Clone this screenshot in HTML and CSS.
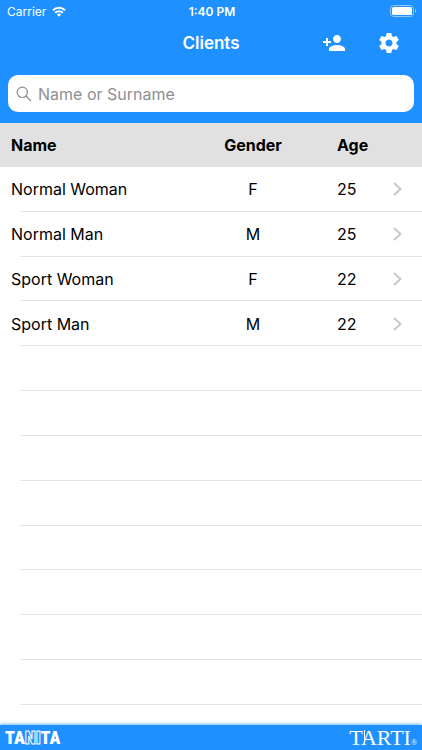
FILE: index.html
```
<!DOCTYPE html>
<html lang="en">
<head>
  <meta charset="UTF-8">
  <meta name="viewport" content="width=device-width, initial-scale=1.0">
  <title>Clients</title>
  <link rel="stylesheet" href="styles.css">
</head>
<body>
  <!-- Top: status bar, title and search -->
  <header class="header">
    <div class="status-bar">
      <div class="carrier">
        <span>Carrier</span>
        <svg width="14" height="11" viewBox="0 0 14 11" fill="none" stroke="#fff" stroke-width="2">
          <path d="M1 4.2a8.6 8.6 0 0 1 12 0M3.2 6.7a5.4 5.4 0 0 1 7.6 0"/>
          <path d="M7 10.8L4.8 8.6a3.1 3.1 0 0 1 4.4 0z" fill="#fff" stroke="none"/>
        </svg>
      </div>
      <span class="clock">1:40 PM</span>
      <div class="battery">
        <svg width="27" height="12" viewBox="0 0 27 12">
          <rect x="0.5" y="0.5" width="23" height="11" rx="3" fill="none" stroke="#8fc7ff"/>
          <rect x="2" y="2" width="20" height="8" rx="1.5" fill="#fff"/>
          <path d="M25 4a2.2 2.2 0 0 1 0 4z" fill="#8fc7ff"/>
        </svg>
      </div>
    </div>

    <div class="navbar">
      <h1>Clients</h1>
      <div class="nav-actions">
        <button type="button" class="btn" aria-label="Add client">
          <svg width="24" height="24" viewBox="0 0 24 24" fill="#fff">
            <path d="M15 12c2.21 0 4-1.79 4-4s-1.79-4-4-4-4 1.79-4 4 1.79 4 4 4zm-9-2V7H4v3H1v2h3v3h2v-3h3v-2H6zm9 4c-2.67 0-8 1.34-8 4v2h16v-2c0-2.66-5.33-4-8-4z"/>
          </svg>
        </button>
        <button type="button" class="btn" aria-label="Settings">
          <svg width="24" height="24" viewBox="0 0 24 24" fill="#fff">
            <path d="M19.43 12.98c.04-.32.07-.64.07-.98s-.03-.66-.07-.98l2.11-1.65c.19-.15.24-.42.12-.64l-2-3.46c-.12-.22-.39-.3-.61-.22l-2.49 1c-.52-.4-1.08-.73-1.69-.98l-.38-2.65C14.46 2.18 14.25 2 14 2h-4c-.25 0-.46.18-.49.42l-.38 2.65c-.61.25-1.17.59-1.69.98l-2.49-1c-.23-.09-.49 0-.61.22l-2 3.46c-.13.22-.07.49.12.64l2.11 1.65c-.04.32-.07.65-.07.98s.03.66.07.98l-2.11 1.65c-.19.15-.24.42-.12.64l2 3.46c.12.22.39.3.61.22l2.49-1c.52.4 1.08.73 1.69.98l.38 2.65c.03.24.24.42.49.42h4c.25 0 .46-.18.49-.42l.38-2.65c.61-.25 1.17-.59 1.69-.98l2.49 1c.23.09.49 0 .61-.22l2-3.46c.12-.22.07-.49-.12-.64l-2.11-1.65zM12 15.5c-1.93 0-3.5-1.57-3.5-3.5s1.57-3.5 3.5-3.5 3.5 1.57 3.5 3.5-1.57 3.5-3.5 3.5z"/>
          </svg>
        </button>
      </div>
    </div>

    <label class="search">
      <svg width="16" height="16" viewBox="0 0 16 16" fill="none" stroke="#8e8e93" stroke-width="1.2">
        <circle cx="6.3" cy="6.3" r="5.2"/>
        <path d="M10 10l5 5"/>
      </svg>
      <input type="text" placeholder="Name or Surname" aria-label="Name or Surname">
    </label>
  </header>

  <!-- Client list -->
  <main class="list">
    <table class="clients">
      <thead>
        <tr>
          <th class="name">Name</th>
          <th class="gender">Gender</th>
          <th class="age">Age</th>
          <th class="more"></th>
        </tr>
      </thead>
      <tbody>
        <tr>
          <td class="name">Normal Woman</td>
          <td class="gender">F</td>
          <td class="age">25</td>
          <td class="more"><a href="#" aria-label="Open Normal Woman"><svg width="9" height="14" viewBox="0 0 9 14"><path d="M1 1l6.5 6L1 13"/></svg></a></td>
        </tr>
        <tr>
          <td class="name">Normal Man</td>
          <td class="gender">M</td>
          <td class="age">25</td>
          <td class="more"><a href="#" aria-label="Open Normal Man"><svg width="9" height="14" viewBox="0 0 9 14"><path d="M1 1l6.5 6L1 13"/></svg></a></td>
        </tr>
        <tr>
          <td class="name">Sport Woman</td>
          <td class="gender">F</td>
          <td class="age">22</td>
          <td class="more"><a href="#" aria-label="Open Sport Woman"><svg width="9" height="14" viewBox="0 0 9 14"><path d="M1 1l6.5 6L1 13"/></svg></a></td>
        </tr>
        <tr>
          <td class="name">Sport Man</td>
          <td class="gender">M</td>
          <td class="age">22</td>
          <td class="more"><a href="#" aria-label="Open Sport Man"><svg width="9" height="14" viewBox="0 0 9 14"><path d="M1 1l6.5 6L1 13"/></svg></a></td>
        </tr>
        <!-- Empty rows -->
        <tr><td class="name"></td><td></td><td></td><td></td></tr>
        <tr><td class="name"></td><td></td><td></td><td></td></tr>
        <tr><td class="name"></td><td></td><td></td><td></td></tr>
        <tr><td class="name"></td><td></td><td></td><td></td></tr>
        <tr><td class="name"></td><td></td><td></td><td></td></tr>
        <tr><td class="name"></td><td></td><td></td><td></td></tr>
        <tr><td class="name"></td><td></td><td></td><td></td></tr>
        <tr><td class="name"></td><td></td><td></td><td></td></tr>
      </tbody>
    </table>
  </main>

  <!-- Brand bar -->
  <footer class="footer">
    <div class="tanita">TA<span>NI</span>TA</div>
    <div class="tarti">T<span>A</span>RTI<small>®</small></div>
  </footer>
</body>
</html>
```
FILE: styles.css
```
* {
  box-sizing: border-box;
}

body {
  display: flex;
  flex-direction: column;
  min-height: 100vh;
  margin: 0;
  background-color: #fff;
  color: #000;
  font-family: Inter, "Liberation Sans", sans-serif;
  font-size: 16px;
}

/* Header */
.header {
  background-color: #1e90ff;
  color: #fff;
  padding-bottom: 11px;
}

.status-bar {
  display: grid;
  grid-template-columns: 1fr auto 1fr;
  align-items: center;
  height: 22px;
  padding: 0 5px 0 7px;
  font-size: 12px;
}

.carrier {
  display: flex;
  align-items: center;
  gap: 6px;
}

.clock {
  font-weight: 600;
}

.battery {
  display: flex;
  justify-content: flex-end;
}

.navbar {
  display: grid;
  grid-template-columns: 1fr auto 1fr;
  align-items: center;
  height: 42px;
  padding: 0 21px;
}

.navbar h1 {
  grid-column: 2;
  margin: 0;
  font-size: 17px;
  font-weight: 600;
}

.nav-actions {
  display: flex;
  justify-content: flex-end;
  gap: 31px;
}

.btn {
  display: flex;
  padding: 0;
  border: none;
  background: none;
  cursor: pointer;
}

/* Search box */
.search {
  display: flex;
  align-items: center;
  gap: 6px;
  height: 37px;
  margin: 11px 8px 0;
  padding: 0 8px;
  border-radius: 10px;
  background-color: #fff;
}

.search input {
  flex: 1;
  min-width: 0;
  padding: 0;
  border: none;
  outline: none;
  background: none;
  font: inherit;
}

.search input::placeholder {
  color: #8e8e93;
}

/* Client table */
.list {
  display: flex;
  flex: 1;
  padding-bottom: 20px;
}

.clients {
  width: 100%;
  table-layout: fixed;
  border-collapse: collapse;
}

.clients tr {
  height: 44px;
}

.clients thead tr {
  background-color: #e1e1e1;
}

.clients th,
.clients td {
  padding: 0;
  text-align: left;
}

.clients th {
  font-weight: 700;
}

.clients td {
  background: linear-gradient(#e4e4e6, #e4e4e6) 0 100% / 100% 1px no-repeat;
}

.clients .name {
  padding-left: 11px;
  background-position: 20px 100%;
}

.clients .gender {
  width: 96px;
  text-align: center;
}

.clients .age {
  width: 92px;
  padding-left: 36px;
}

.clients .more {
  width: 29px;
}

.more a {
  display: flex;
}

.more path {
  fill: none;
  stroke: #c7c7cc;
  stroke-width: 2;
}

/* Footer */
.footer {
  display: flex;
  justify-content: space-between;
  align-items: center;
  height: 25px;
  padding: 0 5px;
  background-color: #1e90ff;
  box-shadow: 0 0 4px #1e90ff;
  color: #fff;
}

.tanita {
  font-family: "Liberation Sans Narrow", "Roboto Condensed", Roboto, sans-serif;
  font-size: 18px;
  font-weight: 900;
}

.tanita span {
  color: transparent;
  -webkit-text-stroke: 1px #fff;
}

.tarti {
  font-family: "Liberation Serif", serif;
  font-size: 22px;
}

/* Slit through the left leg of the A */
.tarti span {
  background: linear-gradient(#fff, #fff) 3px 50% / 1px 14px no-repeat;
}

.tarti small {
  font-size: 8px;
}
```
